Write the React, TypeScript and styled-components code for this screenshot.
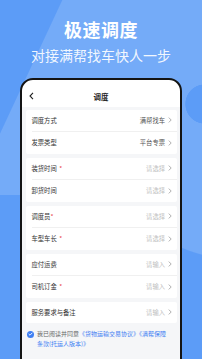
import styled, { createGlobalStyle } from "styled-components"

const GlobalStyle = createGlobalStyle`
    html, body {
        margin: 0;
        padding: 0;
    }
    body {
        font-family: "Noto Sans CJK SC", "Noto Sans", sans-serif;
    }
`;

interface IRow {
    label: string,
    value?: string,
    placeholder?: string,
    required?: boolean,
    spaced?: boolean
}

const groups: IRow[][] = [
    [
        { label: "调度方式", value: "满帮找车" },
        { label: "发票类型", value: "平台专票" },
    ],
    [
        { label: "装货时间", required: true, spaced: true, placeholder: "请选择" },
        { label: "卸货时间", placeholder: "请选择" },
    ],
    [
        { label: "调度员", required: true, placeholder: "请选择" },
        { label: "车型车长", required: true, spaced: true, placeholder: "请选择" },
    ],
    [
        { label: "应付运费", placeholder: "请输入" },
        { label: "司机订金", required: true, spaced: true, placeholder: "请输入" },
    ],
    [
        { label: "服务要求与备注", placeholder: "请输入" },
    ],
]

const Chevron = () => (
    <svg width="4" height="6" viewBox="0 0 4 6">
        <polyline points="0.8,0.6 3.2,3 0.8,5.4" fill="none" stroke="#9a9a9a" strokeWidth="0.8" />
    </svg>
)

export default function App() {
    return (
        <>
            <GlobalStyle />
            <Page>
                <Title>极速调度</Title>
                <Subtitle>对接满帮找车快人一步</Subtitle>
                <Phone>
                    <Header>
                        <BackButton>
                            <svg width="5" height="8" viewBox="0 0 5 8">
                                <polyline points="4,0.8 1,4 4,7.2" fill="none" stroke="#222" strokeWidth="1.1" />
                            </svg>
                        </BackButton>
                        <HeaderTitle>调度</HeaderTitle>
                    </Header>
                    <Content>
                        {groups.map((group, gi) => (
                            <Card key={gi}>
                                {group.map((row) => (
                                    <Row key={row.label}>
                                        <Label>
                                            {row.label}
                                            {row.required && <Star $spaced={row.spaced}>*</Star>}
                                        </Label>
                                        <Value $muted={!row.value}>
                                            {row.value || row.placeholder}
                                            <Chevron />
                                        </Value>
                                    </Row>
                                ))}
                            </Card>
                        ))}
                        <Agreement>
                            <Check>
                                <svg width="5" height="4" viewBox="0 0 5 4">
                                    <polyline points="0.7,2 2,3.2 4.3,0.8" fill="none" stroke="#fff" strokeWidth="0.9" />
                                </svg>
                            </Check>
                            <AgreementText>
                                <Line>我已阅读并同意<Link>《货物运输交易协议》</Link><Link>《满帮保障</Link></Line>
                                <Line><Link>条款(托运人版本)》</Link></Line>
                            </AgreementText>
                        </Agreement>
                    </Content>
                </Phone>
            </Page>
        </>
    )
}

// Page Styles
const Page = styled.div`
    width: 202px;
    height: 359px;
    overflow: hidden;
    display: flex;
    flex-direction: column;
    align-items: center;
    background:
        radial-gradient(circle 20px at 205px 104px, #5c9cf7 97%, transparent 100%),
        radial-gradient(ellipse 130px 110px at 240px 150px, #74abf8 99%, transparent 100%),
        linear-gradient(115deg, transparent 56px, #74abf8 57px) 0 0 / 202px 195px no-repeat,
        #5c9cf7;
`;

const Title = styled.h1`
    margin: 18px 0 0;
    font-size: 18px;
    line-height: 23px;
    font-weight: 700;
    color: #fff;
    letter-spacing: 0.5px;
`;

const Subtitle = styled.p`
    margin: 5px 0 0;
    font-size: 14px;
    line-height: 18px;
    color: rgba(255, 255, 255, 0.92);
`;

const Phone = styled.div`
    width: 162px;
    height: 300px;
    margin-top: 14px;
    flex-shrink: 0;
    box-sizing: border-box;
    border: 2.5px solid #141414;
    border-radius: 13px;
    background: #fff;
    overflow: hidden;
    display: flex;
    flex-direction: column;
`;

const Header = styled.div`
    height: 26.5px;
    padding-top: 6px;
    box-sizing: border-box;
    display: flex;
    align-items: center;
    justify-content: center;
    position: relative;
`;

const BackButton = styled.div`
    position: absolute;
    left: 7px;
    top: 12px;
    display: flex;
`;

const HeaderTitle = styled.div`
    font-size: 7.5px;
    font-weight: 700;
    color: #222;
`;

const Content = styled.div`
    flex: 1;
    background: #f5f6f8;
    padding: 3px 3.5px;
    display: flex;
    flex-direction: column;
    gap: 4px;
`;

const Card = styled.div`
    background: #fff;
    border-radius: 2px;
`;

const Row = styled.div`
    height: 21.5px;
    margin-left: 6px;
    padding-right: 5px;
    display: flex;
    align-items: center;
    justify-content: space-between;
    font-size: 6.3px;

    & + & {
        border-top: 0.5px solid #f0f0f0;
    }
`;

const Label = styled.span`
    color: #333;
`;

const Star = styled.span<{ $spaced?: boolean }>`
    color: #e8414b;
    margin-left: ${p => p.$spaced ? "2.5px" : "0"};
`;

const Value = styled.span<{ $muted?: boolean }>`
    display: flex;
    align-items: center;
    gap: 2.5px;
    color: ${p => p.$muted ? "#c0c0c0" : "#555"};
`;

const Agreement = styled.div`
    margin-top: 2px;
    padding-left: 1.5px;
    display: flex;
    align-items: flex-start;
    gap: 3px;
`;

const Check = styled.div`
    width: 7px;
    height: 7px;
    margin-top: 1.5px;
    border-radius: 50%;
    background: #3f7ff3;
    flex-shrink: 0;
    display: flex;
    align-items: center;
    justify-content: center;
`;

const AgreementText = styled.div`
    font-size: 6px;
    line-height: 10px;
    color: #666;
    white-space: nowrap;
`;

const Line = styled.div``;

const Link = styled.span`
    color: #3f7ff3;
`;
